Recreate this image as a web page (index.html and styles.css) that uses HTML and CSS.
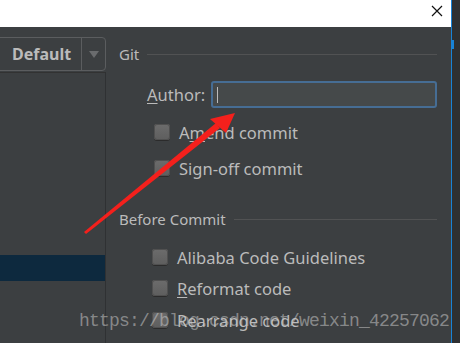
FILE: index.html
```html
<!DOCTYPE html>
<html>

<head>
    <meta name="viewport" content="width=device-width, initial-scale=1.0">
    <title>Git settings</title>
    <link rel="stylesheet" href="styles.css">
</head>

<body>
    <div class="window">
        <div class="title-bar">
            <svg class="close" width="12" height="12" viewBox="0 0 12 12">
                <path d="M1 1 L11 11 M11 1 L1 11" stroke="#111" stroke-width="1.2" fill="none" />
            </svg>
        </div>

        <div class="content">
            <div class="sidebar">
                <div class="combo">
                    <span class="combo-text">Default</span>
                    <span class="combo-btn"><span class="tri"></span></span>
                </div>
                <div class="tree">
                    <div class="tree-selected"></div>
                </div>
            </div>

            <div class="panel">
                <div class="section-title">Git<span class="rule"></span></div>

                <div class="author-row">
                    <label class="author-label"><u>A</u>uthor:</label>
                    <div class="field"><span class="caret"></span></div>
                </div>

                <div class="check-row first"><span class="box"></span><span>A<u>m</u>end commit</span></div>
                <div class="check-row second"><span class="box"></span><span>Sign-off commit</span></div>

                <div class="section-title before">Before Commit<span class="rule"></span></div>

                <div class="check-row wide alibaba"><span class="box"></span><span>Alibaba Code Guidelines</span></div>
                <div class="check-row wide reformat"><span class="box"></span><span><u>R</u>eformat code</span></div>
                <div class="check-row wide rearrange"><span class="box"></span><span>Rearrange code</span></div>
            </div>

            <div class="edge"><span class="edge-mark"></span></div>
        </div>

        <!-- annotation drawn on top of the screenshot -->
        <svg class="arrow" width="460" height="343" viewBox="0 0 460 343">
            <polygon points="84,232 86,234 220,128 216,123" fill="#f4201c" />
            <polygon points="235,113 210,119 226,133" fill="#f4201c" />
        </svg>

        <div class="watermark">https://blog.csdn.net/weixin_42257062</div>
    </div>
</body>

</html>
```

FILE: styles.css
```css
body {
    margin: 0;
    padding: 0;
    font-family: "Noto Sans", "Open Sans", sans-serif;
    background: #3c3f41;
    overflow: hidden;
}

.window {
    position: relative;
    width: 460px;
    height: 343px;
    background: #3c3f41;
    overflow: hidden;
}

.title-bar {
    height: 27px;
    width: 452px;
    background: #ffffff;
    position: relative;
}

.close {
    position: absolute;
    left: 431px;
    top: 5px;
}

.content {
    display: flex;
    height: 316px;
}

/* left side: scheme combo + settings tree */
.sidebar {
    width: 106px;
    display: flex;
    flex-direction: column;
}

.combo {
    margin: 10px 0 0 -6px;
    height: 32px;
    width: 110px;
    border: 1px solid #5b5d5f;
    border-radius: 4px;
    display: flex;
    align-items: center;
    box-sizing: content-box;
}

.combo-text {
    flex: 1;
    padding-left: 17px;
    font-weight: bold;
    font-size: 16px;
    color: #bbbbbb;
}

.combo-btn {
    width: 23px;
    height: 32px;
    border-left: 1px solid #5b5d5f;
    display: flex;
    align-items: center;
    justify-content: center;
}

.tri {
    width: 0;
    height: 0;
    border-left: 5px solid transparent;
    border-right: 5px solid transparent;
    border-top: 7px solid #6a6c6e;
}

.tree {
    flex: 1;
    margin-top: 1px;
    border-top: 1px solid #323232;
    border-right: 1px solid #2f3133;
    padding-top: 182px;
}

.tree-selected {
    height: 26px;
    background: #0d293e;
}

/* right side: git options */
.panel {
    flex: 1;
    padding: 17px 14px 0 13px;
    color: #bbbbbb;
    font-size: 16.5px;
}

.section-title {
    height: 20px;
    display: flex;
    align-items: center;
    gap: 8px;
    font-size: 15px;
}

.rule {
    flex: 1;
    height: 1px;
    background: #515253;
}

.before {
    margin-top: 31px;
}

.author-row {
    margin-top: 17px;
    display: flex;
    align-items: center;
    padding-left: 28px;
    gap: 7px;
}

.author-label {
    width: 57px;
}

.field {
    width: 218px;
    height: 23px;
    border: 2px solid #466d94;
    border-radius: 3px;
    background: #45494a;
    display: flex;
    align-items: center;
    padding-left: 4px;
}

.caret {
    width: 1px;
    height: 16px;
    background: #bbbbbb;
}

.check-row {
    height: 20px;
    display: flex;
    align-items: center;
    gap: 9px;
    padding-left: 35px;
}

.check-row.wide {
    padding-left: 33px;
    gap: 9px;
}

.first {
    margin-top: 14px;
}

.second {
    margin-top: 16px;
}

.alibaba {
    margin-top: 18px;
}

.reformat {
    margin-top: 11px;
}

.rearrange {
    margin-top: 12px;
}

.box {
    width: 16px;
    height: 16px;
    border-radius: 3px;
    background: linear-gradient(#6c6c6c, #5e5e5e);
    box-shadow: 0 1px 0 #2b2b2b, inset 0 0 0 1px #505050;
}

u {
    text-underline-offset: 2px;
}

/* strip of the window behind, at the right edge */
.edge {
    width: 8px;
    border-left: 1px solid #1883d7;
    background: #2e3032;
    margin-top: -27px;
    position: relative;
}

.edge-mark {
    position: absolute;
    left: 0;
    top: 40px;
    width: 2px;
    height: 9px;
    background: #1883d7;
}

.arrow {
    position: absolute;
    left: 0;
    top: 0;
}

.watermark {
    position: absolute;
    left: 79px;
    top: 311px;
    font-family: "Liberation Mono", monospace;
    font-size: 18px;
    letter-spacing: -0.8px;
    color: rgba(200, 200, 200, 0.55);
    white-space: nowrap;
}
```
